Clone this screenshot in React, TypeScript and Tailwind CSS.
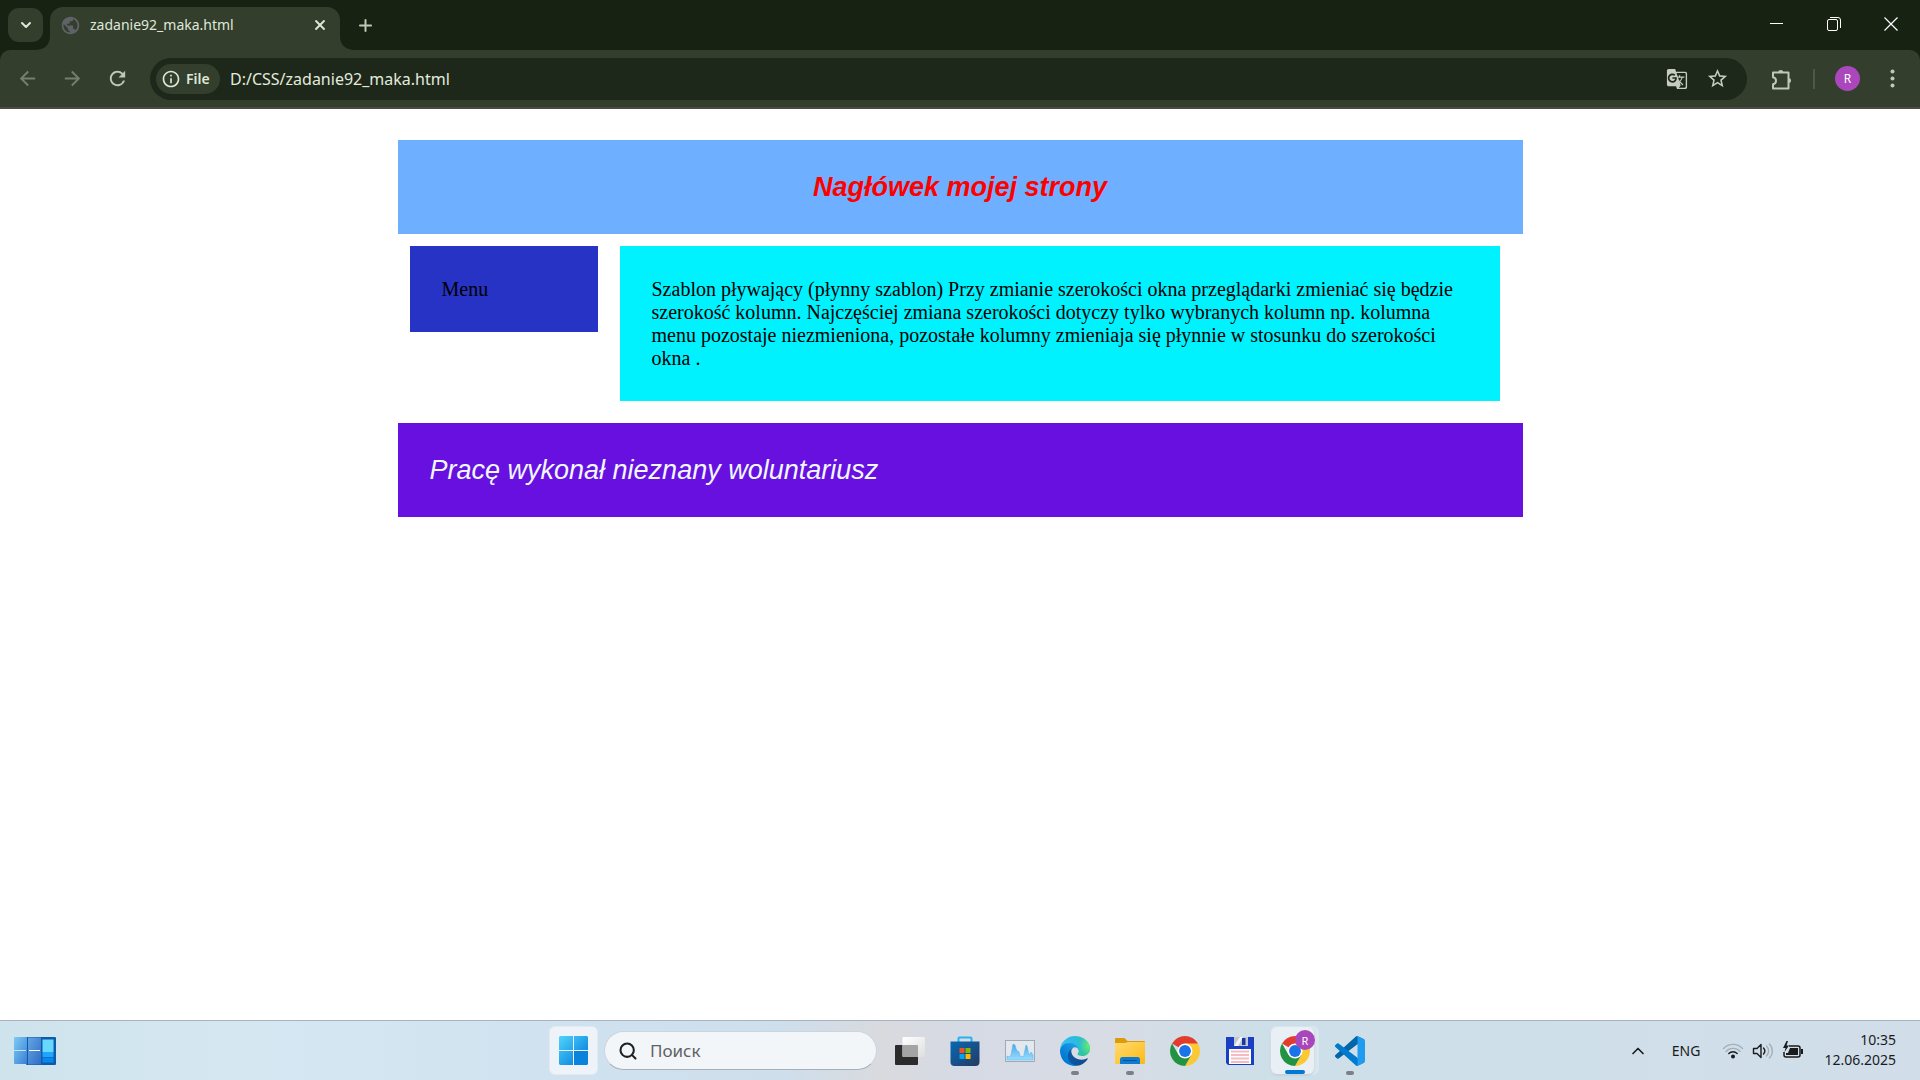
import React from "react";
import { MdArrowBack, MdArrowForward, MdGTranslate, MdInfoOutline, MdPublic, MdRefresh, MdStarOutline } from "react-icons/md";
import { ChevronDown, ChevronUp, Plus, Search, X } from "lucide-react";

const uiFont = "font-['Noto_Sans','Open_Sans',sans-serif]";

function PuzzleIcon() {
  return (
    <svg className="size-6" viewBox="0 0 24 24" fill="none" stroke="#bccbb4" strokeWidth="2" strokeLinejoin="round">
      <path d="M4 5.5H19.5V21.5H4V17.3A3.6 3.6 0 0 0 4 10.2Z" />
      <path d="M9.3 5.5A2.5 2.5 0 0 1 14.3 5.5ZM19.5 11A2.5 2.5 0 0 1 19.5 16Z" fill="#bccbb4" stroke="none" />
    </svg>
  );
}

function TitleBar() {
  return (
    <div className="flex h-[50px] items-start bg-[#182213] pl-2 text-[#dfe8d8]">
      <button aria-label="Search tabs" className="mt-2 flex h-[34px] w-[35px] items-center justify-center rounded-[11px] bg-[#333e2d]">
        <ChevronDown className="size-4" strokeWidth={3} />
      </button>
      <div className="flex h-full">
        <div className="flex w-[7px] flex-col justify-end">
          <svg className="-ml-2 h-[14px] w-[15px]" viewBox="0 0 15 14">
            <path d="M15 0V14H0C9 14 15 9 15 0Z" fill="#333e2d" />
          </svg>
        </div>
        <div className="mt-[7px] flex h-[43px] w-[290px] items-center rounded-t-[13px] bg-[#333e2d] pb-[7px] pl-[10px] pr-[10px]">
          <MdPublic className="size-[21px] text-[#5f6368]" />
          <span className="ml-[9px] flex-1 text-[14px] leading-5">zadanie92_maka.html</span>
          <button aria-label="Close tab" className="flex size-5 items-center justify-center">
            <X className="size-4" strokeWidth={2.8} />
          </button>
        </div>
        <div className="flex flex-col justify-end">
          <svg className="h-[14px] w-[15px]" viewBox="0 0 15 14">
            <path d="M0 0V14H15C6 14 0 9 0 0Z" fill="#333e2d" />
          </svg>
        </div>
      </div>
      <button aria-label="New tab" className="mt-[15px] flex size-5 items-center justify-center text-[#bccbb4]">
        <Plus className="size-[19px]" strokeWidth={2.5} />
      </button>
      <div className="ml-auto flex pr-px text-white">
        <button aria-label="Minimize" className="flex h-12 w-[57px] items-center justify-center">
          <svg className="size-[14px]" viewBox="0 0 14 14"><path d="M0 6.5H13" stroke="currentColor" /></svg>
        </button>
        <button aria-label="Restore" className="flex h-12 w-[57px] items-center justify-center">
          <svg className="size-[14px]" viewBox="0 0 14 14" fill="none" stroke="currentColor">
            <rect x="0.5" y="2.5" width="10" height="11" rx="1.5" />
            <path d="M3 0.5H11A2.5 2.5 0 0 1 13.5 3V11" />
          </svg>
        </button>
        <button aria-label="Close" className="flex h-12 w-[57px] items-center justify-center">
          <svg className="size-[14px]" viewBox="0 0 14 14"><path d="M0.5 0.5L13.5 13.5M13.5 0.5L0.5 13.5" stroke="currentColor" strokeWidth="1.2" /></svg>
        </button>
      </div>
    </div>
  );
}

function Toolbar() {
  return (
    <div className="bg-[#182213]">
      <div className="flex h-[59px] items-center rounded-t-[10px] border-b-2 border-[#4a4b45] bg-[#333e2d] pl-4 pr-[18px]">
        <button aria-label="Back" className="text-[#74806d]"><MdArrowBack className="size-[23px]" /></button>
        <button aria-label="Forward" className="ml-[22px] text-[#74806d]"><MdArrowForward className="size-[23px]" /></button>
        <button aria-label="Reload" className="ml-[22px] text-[#bccbb4]"><MdRefresh className="size-[23px]" /></button>
        <div className="ml-[21px] flex h-[42px] flex-1 items-center rounded-full bg-[#1e281a] pl-1.5 pr-[18px]">
          <button className="flex h-[30px] w-16 items-center rounded-full bg-[#333e2d] pl-[5px] text-[14px] font-semibold text-[#dfe8d8]">
            <MdInfoOutline className="mr-[5px] size-5" />
            File
          </button>
          <input aria-label="Address" defaultValue="D:/CSS/zadanie92_maka.html" className="ml-[10px] min-w-0 flex-1 bg-transparent text-[16px] leading-6 text-[#e3ebdd] outline-none" />
          <button aria-label="Translate" className="text-[#c6cdc0]"><MdGTranslate className="size-[22px]" /></button>
          <button aria-label="Bookmark" className="ml-[18px] text-[#c6cdc0]"><MdStarOutline className="size-[23px]" /></button>
        </div>
        <button aria-label="Extensions" className="ml-[22px]"><PuzzleIcon /></button>
        <div className="ml-5 h-5 w-0.5 bg-[#4b5b43]" />
        <button aria-label="Profile" className="ml-5 flex size-[25px] items-center justify-center rounded-full bg-[#ab47bc] text-[12px] text-white">R</button>
        <button aria-label="Menu" className="ml-[23px] flex size-[19px] items-center justify-center">
          <svg className="size-[19px]" viewBox="0 0 19 19" fill="#bccbb4">
            <circle cx="9.5" cy="2.5" r="2" /><circle cx="9.5" cy="9.5" r="2" /><circle cx="9.5" cy="16.5" r="2" />
          </svg>
        </button>
      </div>
    </div>
  );
}

function Page() {
  return (
    <main className="flex-1 bg-white pt-[31px]">
      <div className="mx-auto w-full max-w-[1125px]">
        <header className="bg-[#6eafff] py-[31px] text-center">
          <h1 className="font-['Liberation_Sans',Arial,sans-serif] text-[27px] font-bold italic leading-8 text-[#ff0000]">Nagłówek mojej strony</h1>
        </header>
        <div className="flex items-start pb-[22px] pl-3 pr-[23px] pt-3 font-['Liberation_Serif','Times_New_Roman',serif] text-[20px] leading-[23px] text-black">
          <nav className="w-[188px] shrink-0 bg-[#2633c5] px-8 pb-[31px] pt-8">Menu</nav>
          <section className="ml-[22px] flex-1 bg-[#00f2ff] px-8 pb-[31px] pt-8">
            Szablon pływający (płynny szablon) Przy zmianie szerokości okna przeglądarki zmieniać się będzie szerokość kolumn. Najczęściej zmiana szerokości dotyczy tylko wybranych kolumn np. kolumna menu pozostaje niezmieniona, pozostałe kolumny zmieniaja się płynnie w stosunku do szerokości okna .
          </section>
        </div>
        <footer className="bg-[#6710e0] px-8 py-[31px] font-['Liberation_Sans',Arial,sans-serif] text-[27px] italic leading-8 text-[#f0f8ff]">Pracę wykonał nieznany woluntariusz</footer>
      </div>
    </main>
  );
}

function WidgetsIcon() {
  return (
    <svg className="h-7 w-[42px]" viewBox="0 0 42 28">
      <defs>
        <linearGradient id="wa" x1="0" y1="0" x2="1" y2="1"><stop stopColor="#7accf5" /><stop offset="1" stopColor="#3b7fd4" /></linearGradient>
        <linearGradient id="wb" x1="0" y1="0" x2="1" y2="1"><stop stopColor="#63a5e3" /><stop offset="1" stopColor="#2f6dc6" /></linearGradient>
      </defs>
      <rect x="12" width="30" height="28" rx="1" fill="#0c5cab" />
      <rect width="13" height="27" rx="1" fill="url(#wa)" />
      <rect x="14" y="0.5" width="13" height="27" fill="url(#wb)" />
      <path d="M0 13.5H12" stroke="#c5e4f7" /><path d="M15 13.5H26" stroke="#fff" />
      <rect x="28.5" y="2.5" width="11" height="12.5" fill="#68d8ff" />
      <rect x="28.5" y="15" width="11" height="5" fill="#20a5fa" />
      <rect x="28.5" y="20.5" width="11" height="5" fill="#0687ee" />
    </svg>
  );
}

function WindowsIcon() {
  return (
    <svg className="size-[29px]" viewBox="0 0 29 29">
      <defs>
        <linearGradient id="win" x1="0" y1="0" x2="29" y2="29" gradientUnits="userSpaceOnUse"><stop stopColor="#50d3fb" /><stop offset="0.5" stopColor="#26a5ea" /><stop offset="1" stopColor="#0072d2" /></linearGradient>
      </defs>
      <path d="M1 0H14V14H0V1ZM15 0H28L29 1V14H15ZM0 15H14V29H1L0 28Z" fill="url(#win)" />
      <path d="M15 15H29V28L28 29H15Z" fill="#0a83db" />
    </svg>
  );
}

function TaskViewIcon() {
  return (
    <svg className="size-[30px]" viewBox="0 0 30 30">
      <defs>
        <linearGradient id="tv" x1="0" y1="0" x2="1" y2="1"><stop stopColor="#fff" /><stop offset="1" stopColor="#dedede" /></linearGradient>
      </defs>
      <rect y="9" width="23" height="20" rx="1" fill="#2b2b2b" />
      <rect x="7.5" y="1" width="22.5" height="20" rx="1" fill="url(#tv)" />
      <path d="M7.5 9H22a1 1 0 0 1 1 1V21H8.5a1 1 0 0 1-1-1Z" fill="#a4a4a4" />
    </svg>
  );
}

function StoreIcon() {
  return (
    <svg className="size-[30px]" viewBox="0 0 30 30">
      <defs>
        <linearGradient id="st" x1="0" y1="0" x2="1" y2="1"><stop stopColor="#0669b5" /><stop offset="1" stopColor="#263a63" /></linearGradient>
      </defs>
      <path d="M8.5 6V2.5a1 1 0 0 1 1-1H20.5a1 1 0 0 1 1 1V6" fill="none" stroke="#25b4ee" strokeWidth="2" />
      <path d="M0.5 5.5H29.5V26a4 4 0 0 1-4 4H4.5a4 4 0 0 1-4-4Z" fill="url(#st)" />
      <path d="M9.5 12h5v5h-5z" fill="#f25022" /><path d="M15.5 12h5v5h-5z" fill="#7fba00" />
      <path d="M9.5 18h5v5h-5z" fill="#00a4ef" /><path d="M15.5 18h5v5h-5z" fill="#ffb900" />
    </svg>
  );
}

function MonitorIcon() {
  return (
    <svg className="size-[30px]" viewBox="0 0 30 30">
      <defs>
        <linearGradient id="mo" x1="0" y1="0" x2="0" y2="1"><stop stopColor="#4aa9e8" /><stop offset="1" stopColor="#9adcff" /></linearGradient>
      </defs>
      <rect x="0.5" y="4.5" width="29" height="21" fill="#e2e8ee" stroke="#9da9b3" />
      <path d="M2 24V20L4 21L6 19L8 8L10 9L11.5 14L14 16L15 20L18.5 21L21 9L22 10L23.5 17L25 19L26 16L28 19V24Z" fill="url(#mo)" stroke="#55aee5" strokeWidth="0.5" />
    </svg>
  );
}

function EdgeIcon() {
  return (
    <svg className="size-[30px]" viewBox="0 0 256 256">
      <defs>
        <linearGradient id="e1" x1="63" y1="84" x2="241" y2="84" gradientTransform="matrix(1 0 0 -1 0 266)" gradientUnits="userSpaceOnUse"><stop stopColor="#0c59a4" /><stop offset="1" stopColor="#114a8b" /></linearGradient>
        <linearGradient id="e2" x1="157" y1="161" x2="46" y2="40" gradientTransform="matrix(1 0 0 -1 0 266)" gradientUnits="userSpaceOnUse"><stop stopColor="#1b9de2" /><stop offset="0.2" stopColor="#1595df" /><stop offset="0.7" stopColor="#0680d7" /><stop offset="1" stopColor="#0078d4" /></linearGradient>
        <radialGradient id="e3" cx="113" cy="570" r="202" gradientTransform="matrix(-.04 1 2.13 .08 -1179.54 -106.69)" gradientUnits="userSpaceOnUse"><stop stopColor="#35c1f1" /><stop offset="0.2" stopColor="#2fb9e8" /><stop offset="0.5" stopColor="#2ac3b9" /><stop offset="1" stopColor="#36c752" /></radialGradient>
        <radialGradient id="e4" cx="376" cy="568" r="97" gradientTransform="matrix(.28 .96 .78 -.23 -303.76 -148.5)" gradientUnits="userSpaceOnUse"><stop stopColor="#66eb6e" /><stop offset="1" stopColor="#66eb6e" stopOpacity="0" /></radialGradient>
      </defs>
      <path fill="url(#e1)" d="M231 190.5c-3.4 1.8-6.9 3.4-10.5 4.7a101.9 101.9 0 0 1-35.9 6.4c-47.3 0-88.5-32.5-88.5-74.3a31.5 31.5 0 0 1 16.4-27.3c-42.8 1.8-53.8 46.4-53.8 72.5 0 74 68.1 81.4 82.8 81.4 7.9 0 19.8-2.3 27-4.6l1.3-.4a128.3 128.3 0 0 0 66.6-52.8 4 4 0 0 0-5.4-5.6Z" />
      <path fill="url(#e2)" d="M105.7 241.4a79.2 79.2 0 0 1-22.7-21.3 80.7 80.7 0 0 1 29.5-120c3.1-1.5 8.5-4.1 15.6-4a32.4 32.4 0 0 1 25.7 13 31.9 31.9 0 0 1 6.3 18.7c0-.2 24.5-79.6-80-79.6-43.9 0-80 41.6-80 78.2a130.2 130.2 0 0 0 12.1 56 128 128 0 0 0 156.4 67 75.5 75.5 0 0 1-62.9-8Z" />
      <path fill="url(#e3)" d="M152.3 148.9c-.8 1-3.3 2.5-3.3 5.7 0 2.6 1.7 5.1 4.7 7.2 14.4 10 41.5 8.7 41.6 8.7a59.6 59.6 0 0 0 30.3-8.3 61.4 61.4 0 0 0 30.4-52.9c.3-22.4-8-37.3-11.3-43.9C223.5 23.9 177.7 0 128 0A128 128 0 0 0 0 126.2c.5-36.5 36.8-66 80-66 3.5 0 23.5.3 42 10a72.6 72.6 0 0 1 30.9 29.3c6.1 10.6 7.2 24.1 7.2 29.5s-2.7 13.3-7.8 19.9Z" />
      <path fill="url(#e4)" d="M152.3 148.9c-.8 1-3.3 2.5-3.3 5.7 0 2.6 1.7 5.1 4.7 7.2 14.4 10 41.5 8.7 41.6 8.7a59.6 59.6 0 0 0 30.3-8.3 61.4 61.4 0 0 0 30.4-52.9c.3-22.4-8-37.3-11.3-43.9C223.5 23.9 177.7 0 128 0A128 128 0 0 0 0 126.2c.5-36.5 36.8-66 80-66 3.5 0 23.5.3 42 10a72.6 72.6 0 0 1 30.9 29.3c6.1 10.6 7.2 24.1 7.2 29.5s-2.7 13.3-7.8 19.9Z" />
    </svg>
  );
}

function FolderIcon() {
  return (
    <svg className="size-[30px]" viewBox="0 0 30 30">
      <defs>
        <linearGradient id="fo" x1="0" y1="0" x2="1" y2="1"><stop stopColor="#ffdb70" /><stop offset="1" stopColor="#fcb914" /></linearGradient>
      </defs>
      <path d="M0 3a1 1 0 0 1 1-1H9.5L12.5 5H29a1 1 0 0 1 1 1V12H0Z" fill="#dd9b07" />
      <path d="M0 7H10L13 6H30V27a1 1 0 0 1-1 1H1a1 1 0 0 1-1-1Z" fill="url(#fo)" />
      <path d="M5 28V23.5A2.5 2.5 0 0 1 7.5 21H22.5A2.5 2.5 0 0 1 25 23.5V28Z" fill="#0f7bd2" />
      <path d="M8.5 24.5H21.5" stroke="#08528f" strokeLinecap="round" />
    </svg>
  );
}

function ChromeIcon() {
  return (
    <svg className="size-[30px]" viewBox="0 0 48 48">
      <path d="M24 24L3.22 12A24 24 0 0 1 44.78 12Z" fill="#e33b2e" />
      <path d="M44.78 12A24 24 0 0 1 24 48L34.39 30L24 12Z" fill="#fcc934" />
      <path d="M3.22 12A24 24 0 0 0 24 48L34.39 30L13.61 30Z" fill="#229342" />
      <circle cx="24" cy="24" r="12" fill="#fff" />
      <circle cx="24" cy="24" r="9.5" fill="#1a73e8" />
    </svg>
  );
}

function FloppyIcon() {
  return (
    <svg className="size-[30px]" viewBox="0 0 30 30">
      <path d="M1 1H29V29H3L1 27Z" fill="#1a3fc4" />
      <path d="M9 1H23V10H9Z" fill="#c3c8cf" /><path d="M9 10L15 1H18L13 10Z" fill="#f3f4f6" />
      <path d="M17 2H20.5V9H17Z" fill="#1737a8" />
      <path d="M4 13H26V28H4Z" fill="#fff" />
      <path d="M6 15.500H24M6 19H24M6 22.5H24M6 26H24" stroke="#f3bcc3" strokeWidth="2" />
    </svg>
  );
}

function CodeIcon() {
  return (
    <svg className="size-[30px]" viewBox="0 0 100 100">
      <path d="M96.5 10.8L75.9.9a6.2 6.2 0 0 0-7.1 1.2L1.3 63.5a4.2 4.2 0 0 0 0 6.2l5.5 5a4.2 4.2 0 0 0 5.3.2L93.4 13.3a4.1 4.1 0 0 1 6.6 3.3v-.2a6.3 6.3 0 0 0-3.5-5.6Z" fill="#0065a9" />
      <path d="M96.5 89.2L75.9 99.1a6.2 6.2 0 0 1-7.1-1.2L1.3 36.5a4.2 4.2 0 0 1 0-6.2l5.5-5a4.2 4.2 0 0 1 5.3-.2L93.4 86.7a4.1 4.1 0 0 0 6.6-3.3v.2a6.3 6.3 0 0 1-3.5 5.6Z" fill="#007acc" />
      <path d="M75.9 99.1a6.2 6.2 0 0 1-7.1-1.2 3.7 3.7 0 0 0 6.2-2.6V4.7a3.7 3.7 0 0 0-6.2-2.6A6.2 6.2 0 0 1 75.9.9l20.6 9.9a6.3 6.3 0 0 1 3.5 5.6v67.2a6.3 6.3 0 0 1-3.5 5.6Z" fill="#1f9cf0" />
    </svg>
  );
}

type TaskProps = { label: string; running?: boolean; children: React.ReactNode };

function TaskButton({ label, running, children }: TaskProps) {
  return (
    <button aria-label={label} className="relative flex h-[49px] w-[49px] items-center justify-center">
      {children}
      {running && <span className="absolute inset-x-0 bottom-0 mx-auto h-1 w-2 rounded-full bg-[#7c8085]" />}
    </button>
  );
}

function Taskbar() {
  return (
    <div className="flex h-[60px] items-center border-t border-[#a9b3bd] bg-[linear-gradient(90deg,#cfe3ec_0%,#d5e8f2_12%,#cfe1ef_32%,#cfdeeb_41%,#d9dade_46%,#d5dae4_50%,#d7dce5_58%,#cddfe8_66%,#cfdfea_80%,#d1deea_100%)]">
      <div className="flex flex-1 items-center">
        <button aria-label="Widgets" className="ml-3.5"><WidgetsIcon /></button>
      </div>
      <div className="flex items-center gap-1.5 pl-[3px]">
        <button aria-label="Start" className="flex size-[49px] items-center justify-center rounded-md border border-[#e3ebf1] bg-[#edf3f9]"><WindowsIcon /></button>
        <label className="mr-0.5 flex h-[39px] w-[273px] items-center rounded-full border border-[#cbd5de] border-b-[#a7b0b9] bg-[#f3f6f9] pl-[13px]">
          <Search className="size-5 text-[#1f1f1f]" strokeWidth={2.5} />
          <input aria-label="Поиск" placeholder="Поиск" className="ml-3 w-40 bg-transparent text-[17px] outline-none placeholder:text-[#5f6264]" />
        </label>
        <TaskButton label="Task view"><TaskViewIcon /></TaskButton>
        <TaskButton label="Store"><StoreIcon /></TaskButton>
        <TaskButton label="Resource monitor"><MonitorIcon /></TaskButton>
        <TaskButton label="Edge" running><EdgeIcon /></TaskButton>
        <TaskButton label="Explorer" running><FolderIcon /></TaskButton>
        <TaskButton label="Chrome"><ChromeIcon /></TaskButton>
        <TaskButton label="Save"><FloppyIcon /></TaskButton>
        <button aria-label="Chrome, profile R" className="relative flex size-[49px] items-center rounded-md border border-[#dce6ed] bg-[#dbe7ef]">
          <span className="flex h-full w-[43px] items-center justify-end rounded-md bg-[#e8f0f6] pr-1 shadow-sm"><ChromeIcon /></span>
          <span className="absolute right-[3px] top-[3px] flex size-5 items-center justify-center rounded-full bg-[#a946b9] text-[11px] leading-none text-white">R</span>
          <span className="absolute inset-x-0 bottom-0 mx-auto h-1 w-5 rounded-full bg-[#0078d4]" />
        </button>
        <TaskButton label="Code" running><CodeIcon /></TaskButton>
      </div>
      <div className="flex flex-1 items-center justify-end text-[14px] leading-5 text-[#1b1b1b]">
        <button aria-label="Hidden icons"><ChevronUp className="size-5" strokeWidth={2} /></button>
        <span className="ml-6">ENG</span>
        <svg className="ml-[22px] size-[22px]" viewBox="0 0 22 22" fill="none" strokeWidth="1.4" strokeLinecap="round">
          <path d="M1.5 8.5A13 13 0 0 1 20.5 8.5M4 11.5A9.5 9.5 0 0 1 18 11.5" stroke="#a4afb8" />
          <path d="M6.8 13.5A6 6 0 0 1 15.2 13.5" stroke="#1b1b1b" />
          <circle cx="11" cy="16.5" r="2" fill="#1b1b1b" />
        </svg>
        <svg className="ml-2 size-[22px]" viewBox="0 0 22 22" fill="none" strokeWidth="1.4" strokeLinecap="round" strokeLinejoin="round">
          <path d="M1.5 8.5H5L9 4.5V17.5L5 13.5H1.5ZM11.5 8A4.5 4.5 0 0 1 11.5 14" stroke="#1b1b1b" />
          <path d="M14.5 6A7 7 0 0 1 14.5 16M17.5 4A10 10 0 0 1 17.5 18" stroke="#a4afb8" />
        </svg>
        <svg className="ml-2 size-[22px]" viewBox="0 0 22 22">
          <path d="M7 6H16A2 2 0 0 1 18 8V15A2 2 0 0 1 16 17H4A2 2 0 0 1 2 15V12" fill="none" stroke="#1b1b1b" strokeWidth="1.5" />
          <path d="M8 8H16V15H4V13H6ZM19 9H21V14H19ZM4.5 1L1 8H3.5L2.5 12L7 5.5H4.5L6 1Z" fill="#1b1b1b" />
        </svg>
        <div className="ml-5 mr-6 pb-0.5 text-right"><div>10:35</div><div>12.06.2025</div></div>
      </div>
    </div>
  );
}

export default function App() {
  return (
    <div className={"flex min-h-screen flex-col " + uiFont}>
      <TitleBar />
      <Toolbar />
      <Page />
      <Taskbar />
    </div>
  );
}
